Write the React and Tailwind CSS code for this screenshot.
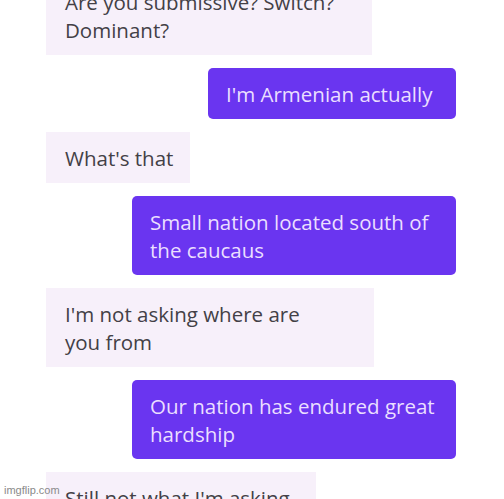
const messages = [
  { from: "them", width: "w-[326px]", lines: ["Are you submissive? Switch?", "Dominant?"] },
  { from: "me", width: "w-[248px]", lines: ["I'm Armenian actually"] },
  { from: "them", width: "w-[144px]", lines: ["What's that"] },
  { from: "me", width: "w-[324px]", lines: ["Small nation located south of", "the caucaus"] },
  { from: "them", width: "w-[328px]", lines: ["I'm not asking where are", "you from"] },
  { from: "me", width: "w-[324px]", lines: ["Our nation has endured great", "hardship"] },
  { from: "them", width: "w-[270px]", lines: ["Still not what I'm asking"] },
];

function Bubble({ from, width, lines }) {
  const mine = from === "me";
  return (
    <div
      className={
        mine
          ? `${width} self-end rounded-[5px] bg-[#6a35f0] px-[18px] py-[11.5px] text-[#eadfff]`
          : `${width} self-start bg-[#f7f0fa] px-[19px] py-[11.5px] text-[#434046]`
      }
    >
      {lines.map((line) => (
        <div key={line} className="whitespace-nowrap">
          {line}
        </div>
      ))}
    </div>
  );
}

export default function App() {
  return (
    <div className="relative h-[499px] w-[504px] overflow-hidden bg-white font-['Open_Sans',sans-serif] text-[20.5px] leading-[28px]">
      <div className="-mt-[24px] flex flex-col gap-[13px] pl-[46px] pr-[48px]">
        {messages.map((m, i) => (
          <Bubble key={i} {...m} />
        ))}
      </div>
      <span className="absolute left-[4px] top-[483px] font-['Liberation_Sans',sans-serif] text-[11px] leading-[14px] text-[#8a8a8a]">
        imgflip.com
      </span>
    </div>
  );
}
